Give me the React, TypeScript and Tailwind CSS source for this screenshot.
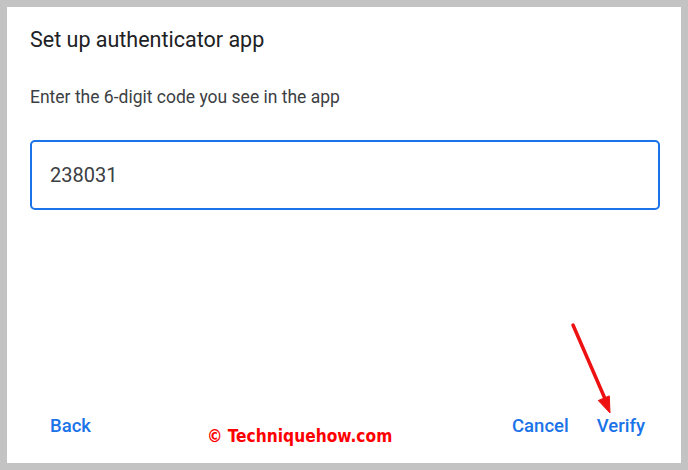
export default function App() {
  return (
    <div className="h-[470px] w-[688px] bg-[#c3c3c3] pb-[7px] pl-[7px] pr-[7px] pt-[7px] font-['Roboto',sans-serif]">
      <div className="relative flex h-full w-[674px] flex-col bg-white px-[23px]">
        <h1 className="pt-[18px] text-[21.5px] leading-[30px] text-[#202124]">Set up authenticator app</h1>
        <p className="mt-[29px] text-[17.5px] leading-[26px] text-[#3c4043]">Enter the 6-digit code you see in the app</p>
        <div className="mt-[30px] flex h-[70px] w-[630px] items-center rounded-[5px] border-2 border-[#1a73e8] px-[18px] text-[20px] text-[#3c4043]">
          238031
        </div>
        <div className="mt-auto mb-[22px] flex items-center text-[18.5px] font-medium text-[#1a73e8]">
          <button className="ml-[20px]">Back</button>
          <button className="ml-auto">Cancel</button>
          <button className="ml-[28px] mr-[13px]">Verify</button>
        </div>
        <div className="absolute left-[200px] top-[417px] font-['DejaVu_Sans_Condensed',sans-serif] text-[17.2px] font-bold text-[#ff0000]">
          © Techniquehow.com
        </div>
        <svg className="absolute left-[550px] top-[300px]" width="70" height="110" viewBox="0 0 70 110">
          <line x1="16" y1="18" x2="49" y2="94" stroke="#ee1111" strokeWidth="3.5" strokeLinecap="round" />
          <polygon points="41.3,93.5 53,106 52.3,88.9" fill="#ee1111" stroke="#ee1111" strokeWidth="1" strokeLinejoin="round" />
        </svg>
      </div>
    </div>
  )
}
